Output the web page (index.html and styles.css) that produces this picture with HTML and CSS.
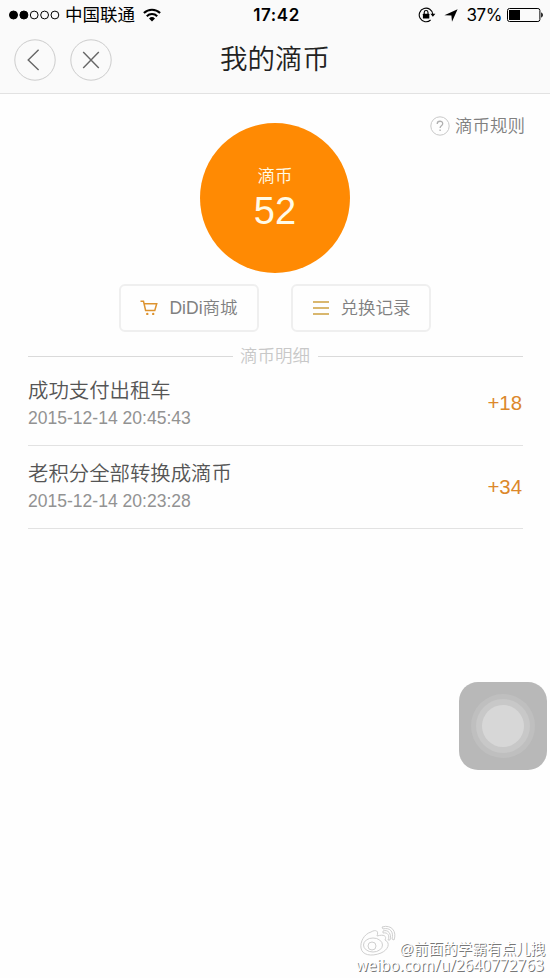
FILE: index.html
```html
<!DOCTYPE html>
<html lang="zh-CN">
<head>
<meta charset="utf-8">
<title>我的滴币</title>
<link rel="stylesheet" href="styles.css">
</head>
<body>
<div class="screen">
  <header class="top">
    <div class="status">
      <div class="status-left">
        <svg class="signal" width="52" height="10" viewBox="0 0 52 10"><g stroke="#000" stroke-width="1"><circle cx="4.5" cy="5" r="4"/><circle cx="14.9" cy="5" r="4"/><g fill="none"><circle cx="25.2" cy="5" r="3.9"/><circle cx="35.6" cy="5" r="3.9"/><circle cx="45.9" cy="5" r="3.9"/></g></g></svg>
        <span class="carrier">中国联通</span>
        <svg class="wifi" width="18" height="14" viewBox="0 0 18 14"><g fill="none" stroke="#000" stroke-width="2.1"><path d="M.9 5a11.6 11.6 0 0 1 16.2 0"/><path d="M3.8 8.2a7.4 7.4 0 0 1 10.4 0"/></g><path d="M9 13.4 6 10.4a4.3 4.3 0 0 1 6 0z"/></svg>
      </div>
      <span class="time">17:42</span>
      <div class="status-right">
        <svg class="lock" width="18" height="16" viewBox="0 0 18 16"><path d="M14.8 7.4A6.8 6.8 0 1 0 12.6 13" fill="none" stroke="#000" stroke-width="1.1"/><path d="M12.4 6.7h5l-2.5 3z"/><rect x="4.9" y="6.8" width="6.4" height="4.8" rx=".5"/><path d="M6.2 7V5.4a1.9 1.9 0 0 1 3.8 0V7" fill="none" stroke="#000" stroke-width="1.1"/></svg>
        <svg class="arrow" width="14" height="13" viewBox="0 0 14 13"><path d="M13.6.2 8 12.8 7.4 6.6.4 6.2z"/></svg>
        <span class="percent">37%</span>
        <svg class="battery" width="37" height="14" viewBox="0 0 37 14"><rect x=".5" y=".5" width="32.4" height="13" rx="2" fill="none" stroke="#000"/><rect x="2" y="2" width="11" height="10"/><path d="M34.2 4.5c2.2.4 2.2 4.6 0 5z"/></svg>
      </div>
    </div>
    <nav class="nav">
      <div class="nav-buttons">
        <svg class="round" width="42" height="42" viewBox="0 0 42 42"><circle cx="21" cy="21" r="20.2"/><path d="M24.6 10.8 14.2 21 24.6 31"/></svg>
        <svg class="round" width="42" height="42" viewBox="0 0 42 42"><circle cx="21" cy="21" r="20.2"/><path d="m13.2 13 15.6 16M28.8 13 13.2 29"/></svg>
      </div>
      <h1 class="title">我的滴币</h1>
      <span></span>
    </nav>
  </header>
  <main class="content">
    <div class="rules">
      <svg width="20" height="20" viewBox="0 0 20 20" fill="none"><circle cx="10" cy="10" r="9.2" stroke="#c8c8c8"/><path d="M7.2 7.9c0-3.5 5.5-3.5 5.5-.2 0 2-2.6 2-2.6 4.2m0 1.5v1.6" stroke="#b0b0b0" stroke-width="1.3"/></svg>
      <span>滴币规则</span>
    </div>
    <section class="coin">
      <span class="coin-label">滴币</span>
      <span class="coin-value">52</span>
    </section>
    <div class="actions">
      <div class="action">
        <svg width="18" height="16" viewBox="0 0 18 16"><path d="M.5 1.3h3l2.1 9.1h9.2l1.9-6.6H4.1" fill="none" stroke="#dd932f" stroke-width="1.5"/><g fill="#dd932f"><circle cx="7.3" cy="13.9" r="1.2"/><circle cx="13.2" cy="13.9" r="1.2"/></g></svg>
        <span>DiDi商城</span>
      </div>
      <div class="action">
        <svg width="18" height="16" viewBox="0 0 18 16"><path d="M1 2h16M1 8h16M1 14h16" stroke="#cda03f" stroke-width="1.5"/></svg>
        <span>兑换记录</span>
      </div>
    </div>
    <h2 class="divider"><span>滴币明细</span></h2>
    <ul class="records">
      <li class="record">
        <div><p class="name">成功支付出租车</p><p class="date">2015-12-14 20:45:43</p></div>
        <span class="amount">+18</span>
      </li>
      <li class="record">
        <div><p class="name">老积分全部转换成滴币</p><p class="date">2015-12-14 20:23:28</p></div>
        <span class="amount">+34</span>
      </li>
    </ul>
  </main>
  <div class="assistive"><i class="ring"></i></div>
  <div class="watermark">
    <div class="handle">
      <svg width="40" height="32" viewBox="0 0 40 32" fill="none" stroke="#cfcfcf"><path d="M15 7c5-3 8-1 6 4 7-2 10 0 8 4 6 3 3 10-4 13-10 4-19 2-20-5C4 17 8 9 15 7z"/><ellipse cx="17" cy="20" rx="9.5" ry="7"/><circle cx="16" cy="21" r="4"/><path d="M27 8c5-1 7 3 5 7l2 0c2-6-2-11-7-9zM26 2c10-3 15 5 12 13l-2-1c2-7-2-12-9-10z"/></svg>
      <span>@前面的学霸有点儿拽</span>
    </div>
    <div class="url">weibo.com/u/2640772763</div>
  </div>
</div>
</body>
</html>
```
FILE: styles.css
```css
* { box-sizing: border-box; margin: 0; padding: 0; }
body { background: #fff; }
svg { display: block; flex: none; }
.screen {
  position: relative;
  width: 550px;
  height: 978px;
  overflow: hidden;
  background: #fefefe;
  font-family: "Liberation Sans", "Noto Sans CJK SC", sans-serif;
  font-weight: 350;
}
.top { height: 94px; background: #fafafa; border-bottom: 1px solid #e2e2e2; }
.status {
  display: grid;
  grid-template-columns: 1fr auto 1fr;
  align-items: center;
  height: 30px;
  padding: 0 6px 0 9px;
  font-family: Inter, "Noto Sans CJK SC", sans-serif;
  font-size: 17.5px;
  line-height: 30px;
  color: #000;
}
.status-left, .status-right { display: flex; align-items: center; }
.status-right { justify-content: flex-end; }
.carrier { margin: 0 8px 0 4px; font-weight: 400; }
.time { font-weight: 600; font-size: 17px; letter-spacing: .6px; }
.lock { margin-right: 8px; }
.arrow { margin-right: 8px; }
.percent { margin-right: 5px; font-weight: 400; font-size: 17px; letter-spacing: -.4px; }
.nav {
  display: grid;
  grid-template-columns: 1fr auto 1fr;
  align-items: center;
  height: 60px;
  padding: 0 14px;
}
.nav-buttons { display: flex; gap: 14px; }
.round { fill: none; stroke: #666; stroke-width: 1.4; }
.round circle { stroke: #ccc; stroke-width: 1; }
.title { font-size: 27.5px; line-height: 40px; font-weight: 350; color: #222; }
.content { display: flow-root; padding: 0 27px; }
.rules {
  display: flex;
  justify-content: flex-end;
  align-items: center;
  gap: 5px;
  height: 20px;
  margin: 22px -2px -13px 0;
  font-size: 17.5px;
  line-height: 20px;
  color: #808080;
}
.coin {
  display: flex;
  flex-direction: column;
  align-items: center;
  width: 150px;
  height: 150px;
  margin: 0 auto;
  padding-top: 40px;
  border-radius: 50%;
  background: #ff8a03;
  color: #fffbe8;
}
.coin-label { font-size: 17.5px; line-height: 26px; }
.coin-value { font-size: 38px; line-height: 44px; }
.actions { display: flex; justify-content: center; gap: 32px; margin-top: 11px; }
.action {
  display: flex;
  align-items: center;
  justify-content: center;
  gap: 11px;
  width: 140px;
  height: 48px;
  border: 2px solid #efefef;
  border-radius: 6px;
  font-size: 17.5px;
  color: #808080;
}
.action span { padding-bottom: 3px; }
.divider {
  display: flex;
  align-items: center;
  gap: 8px;
  height: 26px;
  margin: 11px 0 0;
  padding-left: 1px;
  font-size: 17.5px;
  font-weight: 350;
  color: #c8c8c8;
}
.divider span { margin-left: -1px; padding-bottom: 3px; }
.divider::before, .divider::after { content: ""; flex: 1; height: 1px; background: #dadada; }
.records { margin: -7px 0 0 1px; list-style: none; }
.record {
  display: flex;
  justify-content: space-between;
  align-items: center;
  height: 83.5px;
  padding: 1px 1px 0 0;
  border-bottom: 1px solid #e2e2e2;
}
.name { font-size: 20.4px; line-height: 28px; color: #555; }
.date { font-size: 17.55px; line-height: 26px; color: #929292; }
.amount { font-size: 20.4px; color: #dc882a; }
.assistive {
  position: absolute;
  left: 459px;
  top: 682px;
  display: grid;
  place-items: center;
  width: 88px;
  height: 88px;
  border-radius: 19px;
  background: #b8b8b8;
}
.ring {
  width: 42px;
  height: 42px;
  border-radius: 50%;
  background: #d7d7d7;
  box-shadow: 0 0 0 6px #c8c8c8, 0 0 0 11px #bfbfbf;
}
.watermark {
  position: absolute;
  left: 356px;
  top: 925px;
  color: #fff;
  text-shadow: 1px 1px 0 #777;
  white-space: nowrap;
}
.handle { display: flex; align-items: flex-end; gap: 3px; height: 32px; font-size: 14.6px; }
.handle span { line-height: 16px; }
.url { font-family: "Noto Sans", sans-serif; font-size: 15.4px; font-weight: 400; line-height: 18px; }
```
